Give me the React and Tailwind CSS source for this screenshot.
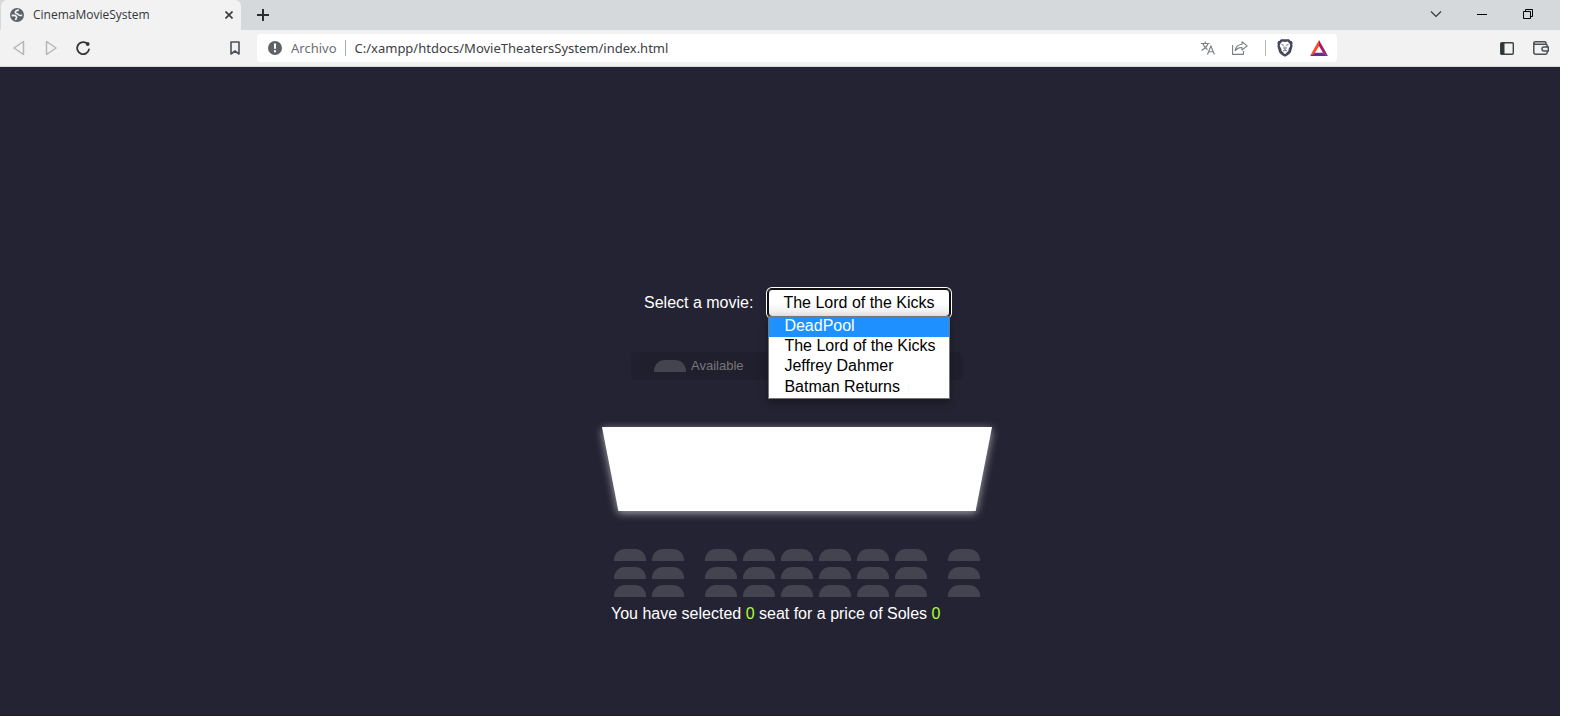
import React, { useState } from "react";

const MOVIES = ["DeadPool", "The Lord of the Kicks", "Jeffrey Dahmer", "Batman Returns"];
const SEAT_BLOCKS = [2, 6, 1];
const ROWS = [0, 1, 2];

function TabStrip() {
  return (
    <div className="flex h-[30px] items-center justify-between bg-[#d5d9dc] pl-px">
      <div className="flex h-full items-center">
        <div className="flex h-full w-60 items-center rounded-t-md bg-[#f2f2f2] pr-0.5 pl-[9px]">
          <svg className="size-[14px] shrink-0" viewBox="0 0 14 14">
            <circle cx="7" cy="7" r="7" fill="#5f6368" />
            <path d="M8.800 2.200C6.400 2.300 5.200 3.200 5.400 4.500 5.700 5.900 8 5.600 8.600 6.800 9 7.800 10.500 7.600 12.200 7.400M1.600 7.600C3.500 7.300 5.600 7.500 6.400 8.500 7.200 9.600 6 10.600 5.400 12" fill="none" stroke="#f2f2f2" strokeWidth="1.700" />
          </svg>
          <span className="ml-[9px] grow font-['Open_Sans',sans-serif] text-[12px] leading-4 text-[#33363a]">CinemaMovieSystem</span>
          <button type="button" aria-label="Close tab" className="flex size-5 items-center justify-center">
            <svg className="size-2" viewBox="0 0 8 8" fill="none" stroke="#3c4043" strokeWidth="1.700">
              <path d="m.5.5 7 7M7.500.5l-7 7" />
            </svg>
          </button>
        </div>
        <button type="button" aria-label="New tab" className="ml-3 flex size-5 items-center justify-center">
          <svg className="size-3" viewBox="0 0 12 12" fill="none" stroke="#2b2e31" strokeWidth="2">
            <path d="M6 0v12M0 6h12" />
          </svg>
        </button>
      </div>
      <div className="flex h-full items-center pr-[9px] pb-0.5 text-black">
        <button type="button" aria-label="Search tabs" className="flex h-5 w-[46px] items-center justify-center text-[#33363a]">
          <svg className="h-2 w-3" viewBox="0 0 12 8" fill="none" stroke="currentColor" strokeWidth="1.200">
            <path d="m1 1.500 5 5 5-5" />
          </svg>
        </button>
        <button type="button" aria-label="Minimize" className="flex h-5 w-[46px] items-center justify-center">
          <svg className="h-px w-[10px]" viewBox="0 0 10 1">
            <rect width="10" height="1" fill="currentColor" />
          </svg>
        </button>
        <button type="button" aria-label="Restore" className="flex h-5 w-[46px] items-center justify-center">
          <svg className="size-[10px]" viewBox="0 0 10 10" fill="none" stroke="currentColor">
            <path d="M.5 2.500h7v7h-7zM2.500 2.500v-2h7v7h-2" />
          </svg>
        </button>
      </div>
    </div>
  );
}

function ToolButton({ label, children }) {
  return (
    <button type="button" aria-label={label} className="flex size-6 shrink-0 items-center justify-center">
      {children}
    </button>
  );
}

function Toolbar() {
  return (
    <div className="flex h-9 items-center bg-[#f2f2f2] pl-[7px]">
      <ToolButton label="Back">
        <svg className="size-4" viewBox="0 0 16 16" fill="none" stroke="#b4b6b9" strokeWidth="1.500" strokeLinejoin="round">
          <path d="M12.500 1.500v13L3 8z" />
        </svg>
      </ToolButton>
      <div className="ml-2 flex">
        <ToolButton label="Forward">
          <svg className="size-4" viewBox="0 0 16 16" fill="none" stroke="#b4b6b9" strokeWidth="1.500" strokeLinejoin="round">
            <path d="M3.500 1.500v13L13 8z" />
          </svg>
        </ToolButton>
      </div>
      <div className="ml-2 flex">
        <ToolButton label="Reload">
          <svg className="size-4" viewBox="0 0 16 16" fill="none" stroke="#323639" strokeWidth="1.800" strokeLinecap="round">
            <path d="M14 9.400A6 6 0 1 1 11.400 3.100" />
            <circle cx="12.700" cy="4" r="1.900" fill="#323639" stroke="none" />
          </svg>
        </ToolButton>
      </div>
      <div className="ml-32 flex">
        <ToolButton label="Bookmark">
          <svg className="h-[14px] w-[10px]" viewBox="0 0 10 14" fill="none" stroke="#4d5054" strokeWidth="1.600" strokeLinejoin="round">
            <path d="M1 1h8v12l-4-3-4 3z" />
          </svg>
        </ToolButton>
      </div>
      <div className="ml-[10px] flex h-7 grow items-center rounded bg-white pr-1.5 pl-[11px]">
        <svg className="size-[14px] shrink-0" viewBox="0 0 14 14">
          <circle cx="7" cy="7" r="7" fill="#5f6368" />
          <path d="M6 2.500h2v5.300H6zM6 9.300h2v2H6z" fill="white" />
        </svg>
        <span className="ml-[9px] text-[13px] leading-5 text-[#6b6e73]">Archivo</span>
        <span className="ml-2 h-4 w-px bg-[#a9abae]" />
        <input
          aria-label="Address"
          readOnly
          value="C:/xampp/htdocs/MovieTheatersSystem/index.html"
          className="ml-[9px] min-w-0 grow bg-transparent text-[13px] leading-5 text-[#3c4043] outline-none"
        />
        <ToolButton label="Translate">
          <svg className="size-[14px]" viewBox="0 0 14 14" fill="none" stroke="#7b7e82" strokeWidth="1.100">
            <path d="M0 2.500h8.500M4.200.500v2M7 2.500C6 5.500 4 7.500.5 9.500M1.700 2.500C2.800 5.500 4.600 7.300 6.500 8.700" />
            <path d="m6.500 13.500 3.400-8.500 3.500 8.500M7.700 10.800h4.500" />
          </svg>
        </ToolButton>
        <div className="mr-[13px] ml-2 flex">
          <ToolButton label="Share">
            <svg className="h-[14px] w-4" viewBox="0 0 16 14" fill="none" stroke="#7b7e82" strokeWidth="1.100" strokeLinejoin="round">
              <path d="M.6 4v9.400h10.800V10" />
              <path d="M10 .8 15.200 4.900 10 9V6.500C7 6.400 5 7.400 3.200 9.600 3.800 5.800 6 3.700 10 3.300z" />
            </svg>
          </ToolButton>
        </div>
        <span className="h-4 w-px bg-[#b5b7ba]" />
        <div className="mr-[10px] ml-[7px] flex">
          <ToolButton label="Brave Shields">
            <svg className="h-[18px] w-4" viewBox="0 0 16 18">
              <path d="M4 .3h8L13.600 2l1-.1 1.100 2-.5 1.700.4 1.500-1.700 6.100c-.3 1-2.600 2.700-5.900 4.600C4.700 15.900 2.400 14.200 2.100 13.200L.4 7.100l.4-1.500L.3 3.900l1.100-2 1 .1z" fill="#45475a" />
              <path d="m5.400 2.500 2.600.6 2.600-.6L12.900 5l.3 2-1.600 3-.1 1.800L8 15.200 4.500 11.800 4.400 10 2.800 7l.3-2z" fill="white" />
              <path d="m4.500 5.600 2.200.6M11.500 5.600l-2.200.6M7.200 7.500 6.800 9.500 8 10.300l1.200-.8-.4-2M6 12l2-1 2 1" fill="none" stroke="#45475a" strokeWidth=".8" />
            </svg>
          </ToolButton>
        </div>
        <ToolButton label="Rewards">
          <svg className="h-4 w-[18px] shrink-0" viewBox="0 0 18 16">
            <path d="M9 0 0 16l5-3.200L9 6z" fill="#ff4724" />
            <path d="m9 0 9 16-5-3.200L9 6z" fill="#9e1f63" />
            <path d="M0 16h18l-5-3.200H5z" fill="#662d91" />
          </svg>
        </ToolButton>
      </div>
      <div className="ml-[158px] flex gap-[10px] pr-[7px]">
        <ToolButton label="Sidebar">
          <svg className="h-[13px] w-[14px]" viewBox="0 0 14 13">
            <rect x=".7" y=".7" width="12.600" height="11.600" rx="1" fill="none" stroke="#3c4043" strokeWidth="1.400" />
            <path d="M1 1h3.500v11H1z" fill="#323639" />
          </svg>
        </ToolButton>
        <ToolButton label="Wallet">
          <svg className="h-[14px] w-4" viewBox="0 0 16 14" fill="none" stroke="#4d5054" strokeWidth="1.500">
            <path d="M14.200 6V4.800q0-1.600-1.600-1.600H2.300Q.8 3.200.8 2T2.300.8h9.400q1.300 0 1.300 1.200v1.200M.8 2v9.200q0 2 2 2h9.800q1.600 0 1.600-1.600V10" />
            <path d="M15.300 6h-4.300a2 2 0 0 0 0 4h4.300z" />
          </svg>
        </ToolButton>
      </div>
    </div>
  );
}

function MoviePicker() {
  const [movie, setMovie] = useState(MOVIES[1]);
  return (
    <div className="ml-[33px] flex h-7 items-center gap-[15px]">
      <label htmlFor="movie" className="text-[16px] leading-5">Select a movie:</label>
      <div className="relative">
        <select
          id="movie"
          value={movie}
          onChange={(e) => setMovie(e.target.value)}
          className="block h-7 w-[182px] appearance-none rounded-[4px] border border-[#101010] bg-linear-to-b from-white from-50% to-[#e9e9e9] pl-[14px] text-[16px] leading-5 text-black shadow-[0_0_0_1px_#101010,0_0_0_2px_#ffffff] outline-none"
        >
          {MOVIES.map((m) => <option key={m}>{m}</option>)}
        </select>
        <ul className="absolute top-[27px] left-0 w-[182px] border border-[#767676] bg-white text-[16px] text-black shadow-[0_4px_8px_rgba(0,0,0,0.35)]">
          {MOVIES.map((m, i) => (
            <li key={m} className={i === 0 ? "h-5 bg-[#1e90ff] pl-[15px] leading-[18px] text-white" : "h-5 pl-[15px] leading-[18px] last:h-[21px] last:leading-5"}>
              {m}
            </li>
          ))}
        </ul>
      </div>
    </div>
  );
}

function SeatMap() {
  return (
    <div className="ml-3 flex flex-col gap-1.5">
      {ROWS.map((row) => (
        <div key={row} className="flex gap-[21px]">
          {SEAT_BLOCKS.map((count, block) => (
            <div key={block} className="flex gap-1.5">
              {Array.from({ length: count }, (_, n) => (
                <button key={n} type="button" aria-label="Seat" className="h-3 w-8 rounded-t-[11px] bg-[#444451]" />
              ))}
            </div>
          ))}
        </div>
      ))}
    </div>
  );
}

export default function App() {
  return (
    <div className="min-h-screen bg-white pr-[34px]">
      <div className="flex min-h-screen flex-col border-b border-[#241a2c] bg-[#242333]">
        <header className="border-b border-[#d5d9dc] font-['Noto_Sans',sans-serif]">
          <TabStrip />
          <Toolbar />
        </header>
        <main className="flex grow flex-col items-center justify-center pt-[132px] pl-[34px] font-['Liberation_Sans',Arial,sans-serif] text-white">
          <div className="w-[390px] pb-px">
            <div className="relative z-10 pl-[9px]">
              <MoviePicker />
            </div>
            <ul className="mt-[35px] ml-[29px] flex h-7 w-[332px] items-center rounded-[5px] bg-black/10 pl-[23px] text-[13px] leading-4 text-[#777777]">
              <li className="flex items-center gap-[5px]">
                <span className="h-3 w-8 rounded-t-[11px] bg-[#444451]" />
                Available
              </li>
            </ul>
            <div className="mt-[47px] drop-shadow-[0_2px_4px_rgba(255,255,255,0.6)]">
              <div className="h-[84px] bg-white [clip-path:polygon(0_0,100%_0,95.800%_100%,4.200%_100%)]" />
            </div>
            <div className="mt-[38px]">
              <SeatMap />
            </div>
            <p className="mt-[7px] ml-[9px] text-[16px] leading-5">
              You have selected <span className="text-[#adff2f]">0</span> seat for a price of Soles{" "}
              <span className="text-[#adff2f]">0</span>
            </p>
          </div>
        </main>
      </div>
    </div>
  );
}
